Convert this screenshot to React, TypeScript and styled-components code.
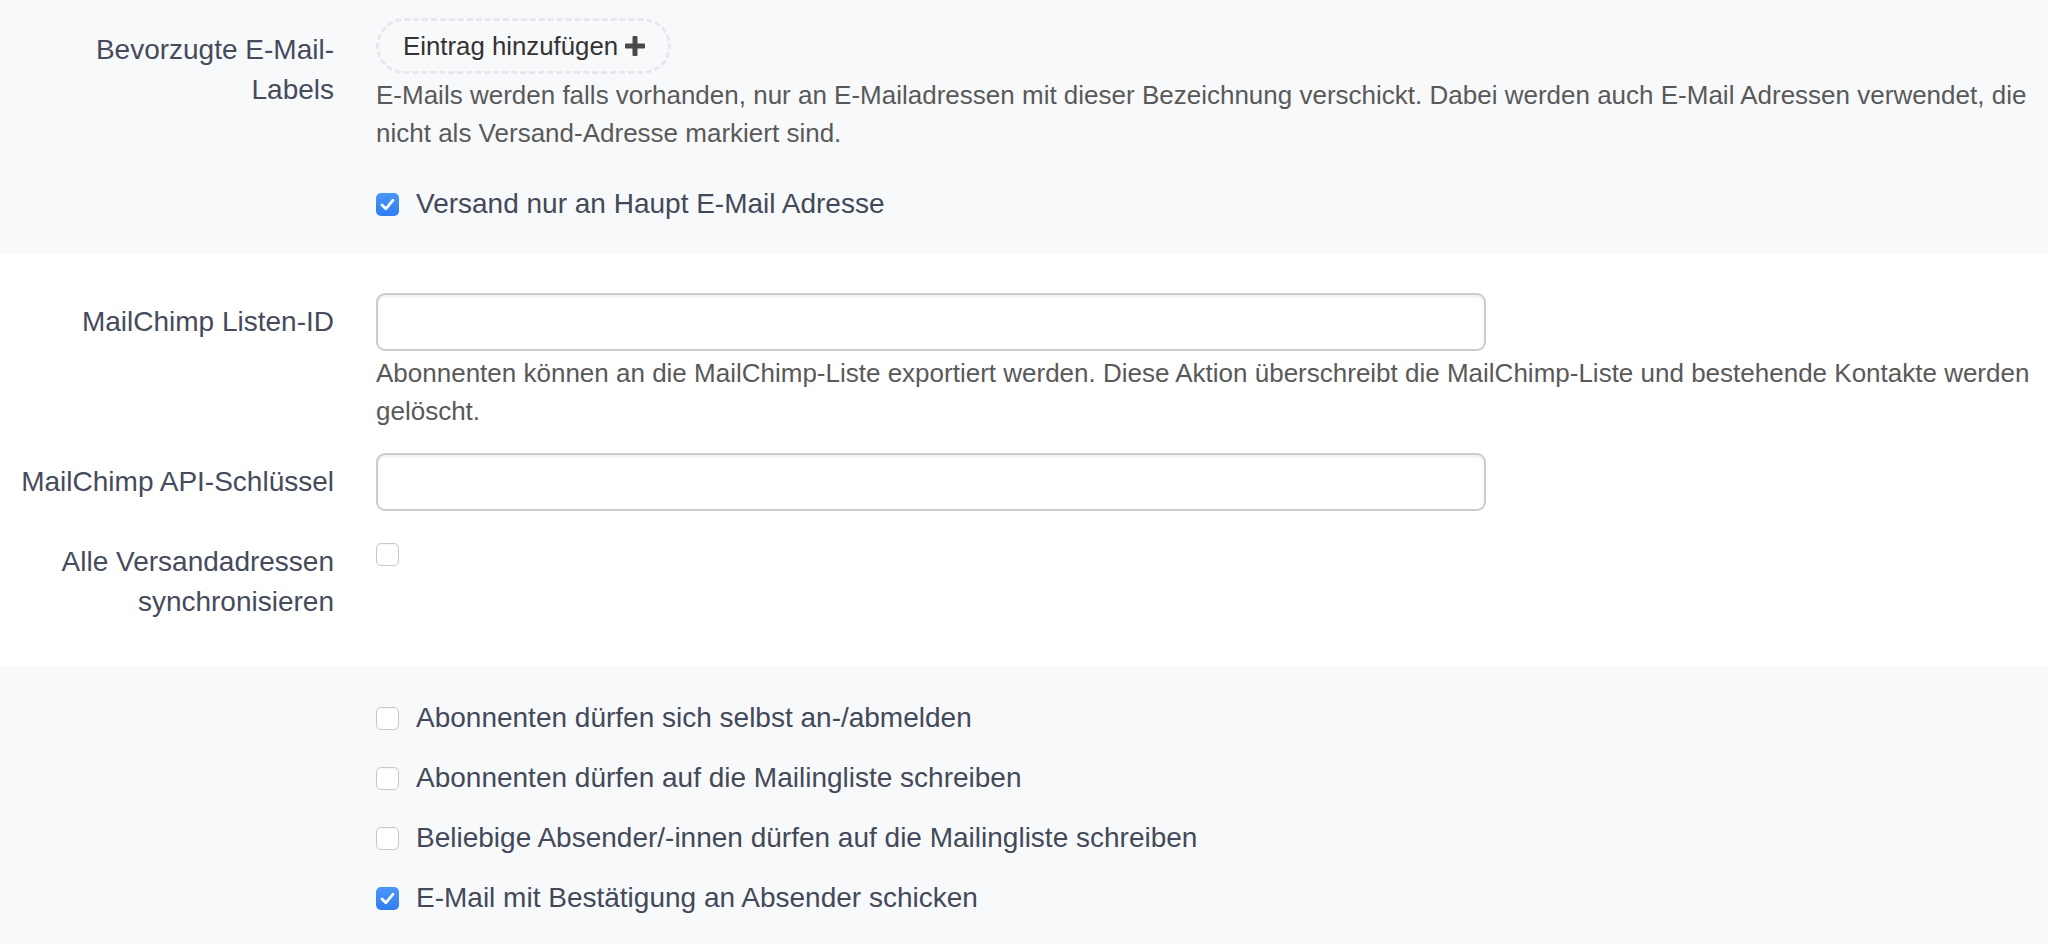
import React from "react";
import styled, { createGlobalStyle } from "styled-components";

const GlobalStyle = createGlobalStyle`
  html, body {
    margin: 0;
    padding: 0;
    background: #ffffff;
    font-family: "Liberation Sans", Arial, Helvetica, sans-serif;
  }
  * { box-sizing: border-box; }
`;

const Page = styled.div`
  width: 2048px;
  height: 944px;
  overflow: hidden;
`;

const Section = styled.section<{ $shaded?: boolean; $pt: number; $pb: number }>`
  background: ${(p) => (p.$shaded ? "#f8f9fb" : "#ffffff")};
  padding: ${(p) => p.$pt}px 18px ${(p) => p.$pb}px 0;
`;

const Group = styled.div<{ $mb?: number }>`
  display: grid;
  grid-template-columns: 334px 1fr;
  column-gap: 42px;
  margin-bottom: ${(p) => p.$mb ?? 23}px;
`;

const Label = styled.label<{ $pt?: number }>`
  text-align: right;
  font-size: 28px;
  line-height: 40px;
  color: #454b5b;
  padding-top: ${(p) => p.$pt ?? 0}px;
  white-space: nowrap;
`;

const Controls = styled.div`
  display: flex;
  flex-direction: column;
  align-items: flex-start;
  min-width: 0;
`;

const AddButton = styled.button`
  display: inline-flex;
  align-items: center;
  gap: 6px;
  height: 56px;
  padding: 0 22px 0 24px;
  border: 3px dashed #e6e8ec;
  border-radius: 28px;
  background: transparent;
  font-family: inherit;
  font-size: 25.8px;
  color: #333333;
`;

const Help = styled.p<{ $mt?: number }>`
  margin: ${(p) => p.$mt ?? 2}px 0 0;
  font-size: 26px;
  line-height: 38px;
  color: #595959;
`;

const TextInput = styled.input`
  width: 1110px;
  height: 58px;
  border: 2px solid #cccccc;
  border-radius: 9px;
  box-shadow: inset 0 2px 3px rgba(0, 0, 0, 0.07);
  background: #ffffff;
  font-size: 24px;
  padding: 0 16px;
  outline: none;
`;

const CheckRow = styled.label<{ $mt?: number; $mb?: number }>`
  display: flex;
  align-items: center;
  gap: 17px;
  margin-top: ${(p) => p.$mt ?? 0}px;
  margin-bottom: ${(p) => p.$mb ?? 0}px;
  font-size: 28px;
  line-height: 38px;
  color: #434959;
`;

const Box = styled.span<{ $checked?: boolean }>`
  flex: none;
  width: 23px;
  height: 23px;
  border-radius: 5px;
  display: inline-flex;
  align-items: center;
  justify-content: center;
  border: ${(p) => (p.$checked ? "none" : "1.5px solid #c8c8c8")};
  background: ${(p) =>
    p.$checked ? "linear-gradient(#4a96f8, #2f7df2)" : "#ffffff"};
  box-shadow: ${(p) => (p.$checked ? "none" : "inset 0 1px 1px rgba(0,0,0,0.04)")};
`;

const CheckOnly = styled.div`
  padding-top: 9px;
`;

function Checkbox({ checked }: { checked?: boolean }) {
  return (
    <Box $checked={checked}>
      {checked && (
        <svg width="15" height="13" viewBox="0 0 15 13">
          <path
            d="M2 7 L5.8 10.8 L13 2.2"
            fill="none"
            stroke="#ffffff"
            strokeWidth="2.8"
            strokeLinecap="round"
            strokeLinejoin="round"
          />
        </svg>
      )}
    </Box>
  );
}

function PlusIcon() {
  return (
    <svg width="22" height="22" viewBox="0 0 22 22">
      <rect x="8.5" y="1" width="5" height="20" rx="1" fill="#4a4a4a" />
      <rect x="1" y="8.5" width="20" height="5" rx="1" fill="#4a4a4a" />
    </svg>
  );
}

const permissions = [
  { text: "Abonnenten dürfen sich selbst an-/abmelden", checked: false },
  { text: "Abonnenten dürfen auf die Mailingliste schreiben", checked: false },
  { text: "Beliebige Absender/-innen dürfen auf die Mailingliste schreiben", checked: false },
  { text: "E-Mail mit Bestätigung an Absender schicken", checked: true },
];

export default function App() {
  return (
    <Page>
      <GlobalStyle />

      <Section $shaded $pt={18} $pb={30}>
        <Group $mb={0}>
          <Label $pt={12}>
            Bevorzugte E-Mail-
            <br />
            Labels
          </Label>
          <Controls>
            <AddButton type="button">
              Eintrag hinzufügen
              <PlusIcon />
            </AddButton>
            <Help>
              E-Mails werden falls vorhanden, nur an E-Mailadressen mit dieser Bezeichnung verschickt. Dabei werden
              auch E-Mail Adressen verwendet, die nicht als Versand-Adresse markiert sind.
            </Help>
            <CheckRow $mt={33}>
              <Checkbox checked />
              Versand nur an Haupt E-Mail Adresse
            </CheckRow>
          </Controls>
        </Group>
      </Section>

      <Section $pt={40} $pb={22}>
        <Group>
          <Label $pt={9}>MailChimp Listen-ID</Label>
          <Controls>
            <TextInput type="text" />
            <Help $mt={3}>
              Abonnenten können an die MailChimp-Liste exportiert werden. Diese Aktion überschreibt die MailChimp-Liste
              und bestehende Kontakte werden gelöscht.
            </Help>
          </Controls>
        </Group>
        <Group>
          <Label $pt={9}>MailChimp API-Schlüssel</Label>
          <Controls>
            <TextInput type="text" />
          </Controls>
        </Group>
        <Group>
          <Label $pt={8}>
            Alle Versandadressen
            <br />
            synchronisieren
          </Label>
          <CheckOnly>
            <Checkbox />
          </CheckOnly>
        </Group>
      </Section>

      <Section $shaded $pt={32} $pb={30}>
        <Group $mb={0}>
          <div />
          <Controls>
            {permissions.map((p) => (
              <CheckRow key={p.text} $mb={22}>
                <Checkbox checked={p.checked} />
                {p.text}
              </CheckRow>
            ))}
          </Controls>
        </Group>
      </Section>
    </Page>
  );
}
